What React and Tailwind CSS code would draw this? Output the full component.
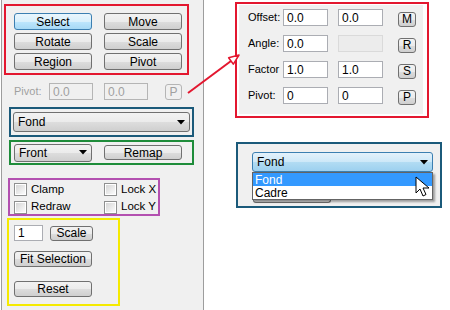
import React from 'react'

const btn =
  'flex items-center justify-center rounded-[3px] border border-[#707070] bg-[linear-gradient(#f2f2f2,#ebebeb_50%,#dddddd_51%,#cfcfcf)] text-black leading-none shrink-0'
const btnBlue =
  'flex items-center justify-center rounded-[3px] border border-[#3c7fb1] bg-[linear-gradient(#eaf6fd,#d9f0fc_50%,#bee6fd_51%,#a7d9f5)] text-black leading-none shrink-0'
const field =
  'flex items-center pl-[3px] border border-[#abadb3] bg-white leading-none shrink-0'

function Caret() {
  return (
    <svg width="8" height="5" viewBox="0 0 8 5" className="shrink-0">
      <path d="M0 0h8L4 4.5z" fill="#000" />
    </svg>
  )
}

function Check({ label }) {
  return (
    <div className="flex items-center gap-[4px] h-[13px]">
      <div className="w-[13px] h-[13px] border border-[#8e8f8f] bg-white p-[1px] shrink-0">
        <div className="w-full h-full bg-[linear-gradient(135deg,#d6d6d6,#fbfbfb)]" />
      </div>
      <span className="leading-none text-[11.5px]">{label}</span>
    </div>
  )
}

function TransformRow({ label, a, b, btnLabel, bDisabled }) {
  return (
    <div className="flex items-center h-[17px]">
      <span className="w-[35px] leading-none text-[11px]">{label}</span>
      <div className={`${field} w-[45px] h-[17px]`}>{a}</div>
      {bDisabled ? (
        <div className="ml-[10px] w-[45px] h-[17px] border border-[#dadada] bg-[#ececec] shrink-0" />
      ) : (
        <div className={`${field} ml-[10px] w-[45px] h-[17px]`}>{b}</div>
      )}
      <div className={`${btn} ml-[15px] mt-[3px] w-[18px] h-[15px]`}>{btnLabel}</div>
    </div>
  )
}

export default function App() {
  return (
    <div className="relative w-[450px] h-[310px] overflow-hidden bg-white flex font-['Liberation_Sans',sans-serif] text-[12px] text-black">
      {/* Left tool panel */}
      <div className="ml-[1px] w-[203px] h-full bg-[#f0f0f0] border-x border-[#9d9d9d] flex flex-col shrink-0">
        {/* Mode buttons */}
        <div className="ml-[2px] mt-[4px] w-[185px] h-[71px] border-2 border-[#e3172f] pl-[8px] pt-[7px] grid grid-cols-[78px_78px] auto-rows-[17px] gap-x-[12px] gap-y-[3px]">
          <div className={`${btnBlue} h-[17px]`}>Select</div>
          <div className={`${btn} h-[17px]`}>Move</div>
          <div className={`${btn} h-[17px]`}>Rotate</div>
          <div className={`${btn} h-[17px]`}>Scale</div>
          <div className={`${btn} h-[17px]`}>Region</div>
          <div className={`${btn} h-[17px]`}>Pivot</div>
        </div>

        {/* Disabled pivot row */}
        <div className="mt-[8px] ml-[12px] flex items-center h-[17px] text-[#a0a0a0]">
          <span className="w-[35px] leading-none text-[11px]">Pivot:</span>
          <div className="w-[44px] h-[17px] border border-[#b5b5b5] flex items-center pl-[3px] leading-none">0.0</div>
          <div className="ml-[11px] w-[44px] h-[17px] border border-[#b5b5b5] flex items-center pl-[3px] leading-none">0.0</div>
          <div className="ml-[17px] w-[17px] h-[16px] border border-[#b5b5b5] rounded-[3px] flex items-center justify-center leading-none">P</div>
        </div>

        {/* Layer combo */}
        <div className="mt-[7px] ml-[7px] w-[185px] h-[30px] border-2 border-[#1b5a7a] px-[2px] py-[3px]">
          <div className={`${btn} !justify-between h-full px-[4px]`}>
            <span>Fond</span>
            <Caret />
          </div>
        </div>

        {/* View + remap */}
        <div className="mt-[3px] ml-[7px] w-[185px] h-[25px] border-2 border-[#1e8c3a] pl-[3px] flex items-center gap-[12px]">
          <div className={`${btn} !justify-between w-[78px] h-[18px] px-[4px]`}>
            <span>Front</span>
            <Caret />
          </div>
          <div className={`${btn} w-[78px] h-[15px]`}>Remap</div>
        </div>

        {/* Options */}
        <div className="mt-[13px] ml-[6px] w-[152px] h-[38px] border-2 border-[#b350b0] pl-[4px] pt-[3px] grid grid-cols-[90px_1fr] gap-y-[4px]">
          <Check label="Clamp" />
          <Check label="Lock X" />
          <Check label="Redraw" />
          <Check label="Lock Y" />
        </div>

        {/* Zoom */}
        <div className="mt-[2px] ml-[5px] w-[113px] h-[88px] border-2 border-[#f5ea00] pl-[5px] pt-[5px] flex flex-col">
          <div className="flex items-center gap-[7px]">
            <div className={`${field} w-[29px] h-[16px]`}>1</div>
            <div className={`${btn} w-[43px] h-[15px]`}>Scale</div>
          </div>
          <div className={`${btn} mt-[10px] w-[78px] h-[16px]`}>Fit Selection</div>
          <div className={`${btn} mt-[14px] w-[78px] h-[16px]`}>Reset</div>
        </div>
      </div>

      {/* Callouts */}
      <div className="flex flex-col">
        <div className="mt-[2px] ml-[31px] w-[194px] h-[116px] border-2 border-[#e3172f] bg-white pt-[1px] pl-[2px] pr-[4px] pb-[2px] flex">
          <div className="flex-1 bg-[#f0f0f0] pl-[9px] pt-[4px] flex flex-col gap-[9px]">
            <TransformRow label="Offset:" a="0.0" b="0.0" btnLabel="M" />
            <TransformRow label="Angle:" a="0.0" btnLabel="R" bDisabled />
            <TransformRow label="Factor" a="1.0" b="1.0" btnLabel="S" />
            <TransformRow label="Pivot:" a="0" b="0" btnLabel="P" />
          </div>
        </div>

        <div className="mt-[24px] ml-[32px] w-[206px] h-[66px] border-2 border-[#1b5a7a] bg-[#f0f0f0] pl-[14px] pt-[8px] flex flex-col">
          <div className="w-[181px] h-[20px] rounded-[3px] border border-[#3c7fb1] bg-[linear-gradient(#e3f1fb,#cde8f8_50%,#b2dcf3_51%,#9dd0ef)] flex items-center justify-between px-[4px] leading-none">
            <span>Fond</span>
            <Caret />
          </div>
          <div className="relative z-10 w-[181px] border border-[#646464] bg-white shadow-[2px_2px_2px_rgba(0,0,0,0.35)] leading-none">
            <div className="h-[13px] bg-[#3399ff] text-white pl-[2px] flex items-center">Fond</div>
            <div className="h-[13px] pl-[2px] flex items-center">Cadre</div>
            <svg width="15" height="21" viewBox="0 0 15 21" className="absolute left-[162px] top-[3px]">
              <path d="M1 1v16l4-4 3 7 3-1.5-3-6.5h6z" fill="#fff" stroke="#000" strokeWidth="1" strokeLinejoin="round" />
            </svg>
          </div>
          <div className="ml-[1px] w-[78px] h-[3px] border-x border-b border-[#707070] rounded-b-[3px] bg-[#d4d4d4]" />
        </div>
      </div>

      {/* Pointer arrow */}
      <svg className="absolute left-0 top-0 pointer-events-none" width="450" height="310">
        <line x1="188" y1="93" x2="231" y2="61" stroke="#e3172f" strokeWidth="2" />
        <path d="M239 55L233.4 64.2L228.6 57.8Z" fill="#fff" stroke="#e3172f" strokeWidth="1.5" strokeLinejoin="round" />
      </svg>
    </div>
  )
}
